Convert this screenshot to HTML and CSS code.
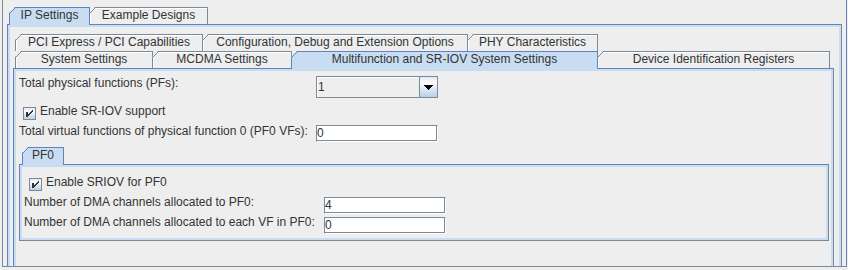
FILE: index.html
```html
<!DOCTYPE html>
<html lang="en">
<head>
    <meta charset="UTF-8">
    <title>IP Settings</title>
    <link rel="stylesheet" href="styles.css">
</head>
<body>
    <div class="frame">
        <div class="tab-row">
            <div class="tab selected tab-ip">IP Settings</div>
            <div class="tab tab-examples">Example Designs</div>
        </div>

        <div class="pane outer-pane">
            <div class="tab-row">
                <div class="tab tab-pci">PCI Express / PCI Capabilities</div>
                <div class="tab tab-config">Configuration, Debug and Extension Options</div>
                <div class="tab tab-phy">PHY Characteristics</div>
            </div>
            <div class="tab-row">
                <div class="tab tab-system">System Settings</div>
                <div class="tab tab-mcdma">MCDMA Settings</div>
                <div class="tab selected tab-multi">Multifunction and SR-IOV System Settings</div>
                <div class="tab tab-device">Device Identification Registers</div>
            </div>

            <div class="pane inner-pane">
                <div class="row row-pfs">
                    <span class="label main-label">Total physical functions (PFs):</span>
                    <div class="combo">
                        <span class="combo-value">1</span>
                        <span class="combo-button">
                            <svg width="9" height="5" viewBox="0 0 9 5" shape-rendering="crispEdges">
                                <rect x="0" y="0" width="9" height="1" fill="#000"/>
                                <rect x="1" y="1" width="7" height="1" fill="#000"/>
                                <rect x="2" y="2" width="5" height="1" fill="#000"/>
                                <rect x="3" y="3" width="3" height="1" fill="#000"/>
                                <rect x="4" y="4" width="1" height="1" fill="#000"/>
                            </svg>
                        </span>
                    </div>
                </div>

                <div class="row check-row main-check">
                    <svg class="checkbox" width="13" height="13" viewBox="1 1 11 11" shape-rendering="crispEdges">
                        <rect x="3" y="5" width="2" height="5" fill="#333"/>
                        <rect x="9" y="3" width="1" height="2" fill="#333"/>
                        <rect x="8" y="4" width="1" height="2" fill="#333"/>
                        <rect x="7" y="5" width="1" height="2" fill="#333"/>
                        <rect x="6" y="6" width="1" height="2" fill="#333"/>
                        <rect x="5" y="7" width="1" height="2" fill="#333"/>
                    </svg>
                    <span class="label">Enable SR-IOV support</span>
                </div>

                <div class="row row-vfs">
                    <span class="label main-label">Total virtual functions of physical function 0 (PF0 VFs):</span>
                    <div class="field">0</div>
                </div>

                <div class="tab-row pf-tabs">
                    <div class="tab selected tab-pf0">PF0</div>
                </div>
                <div class="pane pf-pane">
                    <div class="row check-row pf-check">
                        <svg class="checkbox" width="13" height="13" viewBox="1 1 11 11" shape-rendering="crispEdges">
                            <rect x="3" y="5" width="2" height="5" fill="#333"/>
                            <rect x="9" y="3" width="1" height="2" fill="#333"/>
                            <rect x="8" y="4" width="1" height="2" fill="#333"/>
                            <rect x="7" y="5" width="1" height="2" fill="#333"/>
                            <rect x="6" y="6" width="1" height="2" fill="#333"/>
                            <rect x="5" y="7" width="1" height="2" fill="#333"/>
                        </svg>
                        <span class="label">Enable SRIOV for PF0</span>
                    </div>
                    <div class="row pf-field-row row-dma">
                        <span class="label pf-label">Number of DMA channels allocated to PF0:</span>
                        <div class="field">4</div>
                    </div>
                    <div class="row pf-field-row row-dma-vf">
                        <span class="label pf-label">Number of DMA channels allocated to each VF in PF0:</span>
                        <div class="field">0</div>
                    </div>
                </div>
            </div>
        </div>
    </div>
</body>
</html>
```

FILE: styles.css
```css
body {
    margin: 0;
    background-color: #eeeeee;
    font-family: "Liberation Sans", Arial, sans-serif;
    font-size: 12px;
    color: #333333;
}
.frame {
    box-sizing: border-box;
    width: 845px;
    height: 267px;
    margin-left: 2px;
    padding: 7px 4px 0 4px;
    border-left: 1px solid #7a8a99;
    border-right: 1px solid #6382bf;
    border-bottom: 1px solid #7a8a99;
    overflow: hidden;
}

/* tabs */
.tab-row {
    display: flex;
    align-items: flex-start;
    padding-left: 2px;
}
.tab {
    box-sizing: border-box;
    position: relative;
    height: 17px;
    border: 1px solid #7a8a99;
    border-bottom: none;
    background-color: #eeeeee;
    box-shadow: inset 1px 1px 0 #ffffff;
    line-height: 14px;
    text-align: center;
    white-space: nowrap;
    clip-path: polygon(6px 0, 100% 0, 100% 100%, 0 100%, 0 6px);
}
.tab + .tab {
    margin-left: -1px;
}
.tab::before {
    content: "";
    position: absolute;
    left: -1px;
    top: -1px;
    width: 7px;
    height: 7px;
    background: linear-gradient(to bottom right, transparent calc(50% - 0.6px), #7a8a99 calc(50% - 0.6px), #7a8a99 calc(50% + 0.6px), transparent calc(50% + 0.6px));
}
.tab.selected {
    z-index: 1;
    height: 18px;
    margin-bottom: -1px;
    background-color: #c8ddf2;
    border-color: #6382bf;
    box-shadow: none;
}
.tab.selected::before {
    background: linear-gradient(to bottom right, transparent calc(50% - 0.6px), #6382bf calc(50% - 0.6px), #6382bf calc(50% + 0.6px), transparent calc(50% + 0.6px));
}
.tab-ip { width: 81px; }
.tab-examples { width: 119px; }
.tab-pci { width: 188px; }
.tab-config { width: 266px; }
.tab-phy { width: 131px; }
.tab-system { width: 138px; }
.tab-mcdma { width: 140px; }
.tab-multi { width: 307px; }
.tab-device { width: 233px; }
.tab-pf0 { width: 42px; }

/* tab content areas */
.pane {
    border: 1px solid #7a8a99;
    border-top-color: #6382bf;
    border-left-color: #6382bf;
    box-shadow: inset 0 0 0 2px #c8ddf2;
}
.outer-pane {
    height: 300px;
    padding: 9px 7px 0 5px;
}
.inner-pane {
    height: 260px;
    padding: 7px 4px 0 5px;
}
.pf-tabs {
    margin-top: 5px;
    padding-left: 3px;
}
.pf-pane {
    padding: 10px 0 6px 4px;
}

/* form rows */
.row {
    display: flex;
    align-items: flex-start;
}
.label {
    line-height: 15px;
    white-space: nowrap;
}
.main-label {
    width: 297px;
}
.pf-label {
    width: 300px;
}
.check-row .checkbox {
    margin-top: 3px;
    margin-right: 4px;
}
.main-check {
    margin-top: 6px;
}
.main-check .checkbox {
    margin-left: 4px;
}
.pf-check .checkbox {
    margin-left: 5px;
}
.row-vfs {
    margin-top: 4px;
}
.row-vfs .field {
    margin-top: 1px;
}
.row-dma {
    margin-top: 4px;
}
.row-dma-vf {
    margin-top: 1px;
}
.pf-field-row .field {
    margin-top: 2px;
}

.checkbox {
    box-sizing: border-box;
    flex: none;
    border: 1px solid #7a8a99;
    background: linear-gradient(#dde8f3 0%, #ffffff 30%, #dde8f3 60%, #b8cfe5 100%);
}

.combo {
    box-sizing: border-box;
    display: flex;
    width: 122px;
    height: 22px;
    border: 1px solid #7a8a99;
    background-color: #eeeeee;
    box-shadow: inset 1px 1px 0 #ffffff;
}
.combo-value {
    flex: 1;
    padding-left: 1px;
    line-height: 20px;
}
.combo-button {
    display: flex;
    align-items: center;
    justify-content: center;
    width: 17px;
    border-left: 1px solid #7a8a99;
    background: linear-gradient(#dde8f3 0%, #ffffff 30%, #dde8f3 60%, #b8cfe5 100%);
}

.field {
    box-sizing: border-box;
    width: 122px;
    height: 17px;
    border: 1px solid #7a8a99;
    border-right-color: #ffffff;
    border-bottom-color: #ffffff;
    box-shadow: inset -1px -1px 0 #7a8a99;
    background-color: #ffffff;
    line-height: 15px;
}
```
